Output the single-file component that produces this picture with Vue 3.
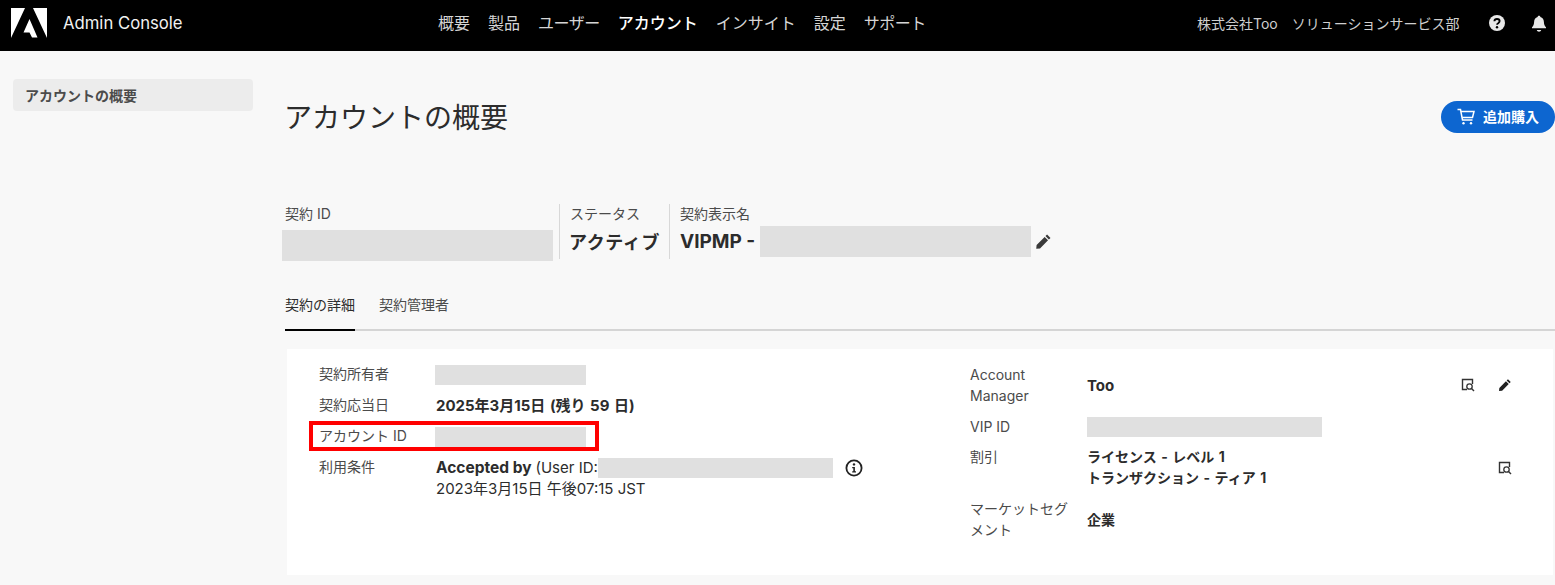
<script setup>
const nav = [
  { text: '概要' },
  { text: '製品' },
  { text: 'ユーザー', tight: true },
  { text: 'アカウント', on: true },
  { text: 'インサイト' },
  { text: '設定' },
  { text: 'サポート', tight: true }
]
</script>

<template>
  <div class="page">
    <header class="top">
      <svg class="logo" viewBox="0 0 36 30" width="36" height="30">
        <polygon points="0,0 14,0 0,30" fill="#fff" />
        <polygon points="22,0 36,0 36,30" fill="#fff" />
        <polygon points="18.5,11 26.5,29.500 21,29.500 18.500,24.500 12.500,24.500" fill="#fff" />
      </svg>
      <span class="brand">Admin Console</span>
      <nav class="nav">
        <a v-for="item in nav" :key="item.text" :class="{ on: item.on, tight: item.tight }">{{ item.text }}</a>
      </nav>
      <div class="org">
        <span>株式会社Too</span>
        <span>ソリューションサービス部</span>
      </div>
      <svg class="help" viewBox="0 0 16 16" width="16" height="16">
        <circle cx="8" cy="8" r="8" fill="#e8e8e8" />
        <path d="M5.4 6.2C5.5 4.7 6.6 4 8 4c1.5 0 2.6.8 2.6 2.1 0 1.1-.7 1.6-1.4 2.1-.7.4-1.1.8-1.1 1.5" fill="none" stroke="#000" stroke-width="1.9" />
        <circle cx="8" cy="12.2" r="1.2" fill="#000" />
      </svg>
      <svg class="bell" viewBox="0 0 16 18" width="16" height="18">
        <path d="M8 0.8c.8 0 1.3.5 1.4 1.2 2.3.6 3.4 2.6 3.5 5 .1 2.6.7 3.8 2.1 5.2v1.1H1v-1.1C2.400 10.800 3 9.600 3.100 7c.1-2.400 1.200-4.400 3.500-5C6.700 1.300 7.200.8 8 .8z" fill="#e8e8e8" />
        <path d="M5.800 15h4.400c-.2 1-1.100 1.700-2.200 1.700S6 16 5.800 15z" fill="#e8e8e8" />
      </svg>
    </header>

    <div class="body">
      <aside class="side">
        <div class="side-item">アカウントの概要</div>
      </aside>

      <main class="main">
        <div class="title-row">
          <h1>アカウントの概要</h1>
          <button class="buy">
            <svg viewBox="0 0 18 18" width="18" height="18" fill="none" stroke="#fff" stroke-width="1.500">
              <path d="M0.500 1.500h3l2 10.500h10" />
              <path d="M4 3.500h13l-1.500 6H5.200" />
              <circle cx="6.500" cy="15.200" r="1.200" fill="#fff" stroke="none" />
              <circle cx="14" cy="15.200" r="1.200" fill="#fff" stroke="none" />
            </svg>
            <span class="buy-text">追加購入</span>
          </button>
        </div>

        <section class="fields">
          <div class="field first">
            <div class="label">契約 ID</div>
            <div class="mask mask-id"></div>
          </div>
          <div class="field status">
            <div class="label">ステータス</div>
            <div class="big">アクティブ</div>
          </div>
          <div class="field name">
            <div class="label">契約表示名</div>
            <div class="name-row">
              <span class="big plain">VIPMP -</span>
              <div class="mask mask-name"></div>
              <svg class="pen" viewBox="0 0 18 18" width="17" height="17">
                <path d="M12.800 1.600l3.600 3.600-1.700 1.700-3.600-3.600zM10.200 4.200l3.600 3.600-8.500 8.500-4 .4.400-4z" fill="#3a3a3a" />
              </svg>
            </div>
          </div>
        </section>

        <div class="tabs">
          <a class="tab active">契約の詳細</a>
          <a class="tab">契約管理者</a>
        </div>

        <section class="card">
          <div class="col left">
            <div class="highlight"></div>
            <div class="row"><div class="k">契約所有者</div><div class="mask m151"></div></div>
            <div class="row"><div class="k">契約応当日</div><div class="v wide strong gap">2025年3月15日 (残り 59 日)</div></div>
            <div class="row"><div class="k">アカウント ID</div><div class="mask m151"></div></div>
            <div class="row">
              <div class="k">利用条件</div>
              <div class="v wide">
                <div class="terms">
                  <span class="strong accepted">Accepted by</span>
                  <span class="user">(User ID:</span>
                  <div class="mask m235"></div>
                  <svg class="info" viewBox="0 0 18 18" width="18" height="18">
                    <circle cx="9" cy="9" r="7.600" fill="none" stroke="#222" stroke-width="1.800" />
                    <circle cx="9" cy="5.400" r="1.200" fill="#222" />
                    <path d="M7.200 8h2.700v4.300h1.100v1.200H7.200v-1.200h1.100V9.200H7.200z" fill="#222" />
                  </svg>
                </div>
                <div>2023年3月15日 午後07:15 JST</div>
              </div>
            </div>
          </div>

          <div class="col right">
            <div class="row r3 mid">
              <div class="k2 narrow">Account Manager</div>
              <div class="v wide strong">Too</div>
              <div class="acts">
                <svg class="ic" viewBox="0 0 14 14" width="14" height="14">
                  <path d="M11.500 6V1.500h-10v10H6" fill="none" stroke="#333" stroke-width="1.400" />
                  <circle cx="8.500" cy="8.500" r="2.700" fill="none" stroke="#333" stroke-width="1.300" />
                  <path d="M10.500 10.500l2.500 2.500" stroke="#333" stroke-width="1.400" />
                </svg>
                <svg class="ic" viewBox="0 0 18 18" width="14" height="14">
                  <path d="M12.800 1.600l3.600 3.600-1.700 1.700-3.600-3.600zM10.200 4.200l3.600 3.600-8.500 8.500-4 .4.400-4z" fill="#222" />
                </svg>
              </div>
            </div>
            <div class="row r3"><div class="k2 narrow">VIP ID</div><div class="mask m235"></div><div></div></div>
            <div class="row r3">
              <div class="k narrow">割引</div>
              <div class="v strong spaced">
                <div>ライセンス - レベル 1</div>
                <div>トランザクション - ティア 1</div>
              </div>
              <div class="acts">
                <svg class="ic" viewBox="0 0 14 14" width="14" height="14">
                  <path d="M11.500 6V1.500h-10v10H6" fill="none" stroke="#333" stroke-width="1.400" />
                  <circle cx="8.500" cy="8.500" r="2.700" fill="none" stroke="#333" stroke-width="1.300" />
                  <path d="M10.500 10.500l2.500 2.500" stroke="#333" stroke-width="1.400" />
                </svg>
              </div>
            </div>
            <div class="row r3 mid">
              <div class="k2 narrow">マーケットセグメント</div>
              <div class="v strong">企業</div>
              <div></div>
            </div>
          </div>
        </section>
      </main>
    </div>
  </div>
</template>

<style>
html, body { margin: 0; background: #f8f8f8; overflow: hidden; }
</style>

<style scoped>
.page {
  width: 1555px;
  height: 585px;
  overflow: hidden;
  background: #f8f8f8;
  color: #2c2c2c;
  font-family: Inter, "Noto Sans CJK JP", sans-serif;
  font-size: 14px;
  line-height: 21px;
}
.top {
  height: 51px;
  box-sizing: border-box;
  padding-bottom: 5px;
  background: #000;
  display: flex;
  align-items: center;
  color: #fff;
}
.logo { margin-left: 11px; flex: none; }
.brand { margin-left: 16px; font-size: 16.700px; color: #f2f2f2; width: 375px; flex: none; }
.nav { display: flex; gap: 18px; font-size: 16px; color: #d5d5d5; width: 759px; flex: none; }
.nav .on { color: #fff; font-weight: 500; }
.nav .tight { letter-spacing: -0.5px; }
.org { display: flex; gap: 14px; font-size: 14px; color: #cfcfcf; white-space: nowrap; width: 292px; flex: none; }
.help { flex: none; }
.bell { flex: none; margin-left: 26px; margin-top: 1px; }
.body { display: flex; }
.side { width: 285px; flex: none; padding: 28px 0 0 13px; box-sizing: border-box; }
.side-item {
  width: 240px;
  height: 32px;
  line-height: 34px;
  box-sizing: border-box;
  padding-left: 12px;
  background: #ececec;
  border-radius: 4px;
  font-size: 14px;
  font-weight: 700;
  color: #4b4b4b;
}
.main { flex: 1; min-width: 0; padding-top: 46px; }
.title-row { display: flex; justify-content: space-between; align-items: center; height: 40px; }
h1 { margin: 2px 0 0 -1px; font-size: 28px; line-height: 40px; font-weight: 400; color: #2c2c2c; }
.buy {
  width: 114px;
  height: 32px;
  border: 0;
  border-radius: 16px;
  background: #0d66d0;
  color: #fff;
  font: inherit;
  font-weight: 700;
  display: flex;
  align-items: center;
  gap: 8px;
  padding: 0 0 0 16px;
  box-sizing: border-box;
}
.buy-text { margin-top: -2px; }
.fields { display: flex; margin-top: 67px; height: 55px; }
.label { font-size: 14px; line-height: 20px; color: #4b4b4b; }
.field { box-sizing: border-box; }
.first { width: 274px; }
.status { width: 110px; border-left: 1px solid #d8d8d8; padding-left: 10px; }
.name { border-left: 1px solid #d8d8d8; padding-left: 10px; }
.big { font-size: 18px; line-height: 28px; font-weight: 700; margin-top: 5px; white-space: nowrap; letter-spacing: 0.6px; margin-left: -1px; }
.big.plain { margin: 0; font-size: 19px; letter-spacing: 0; }
.mask { background: #e0e0e0; flex: none; }
.mask-id { width: 271px; height: 31px; margin: 6px 0 0 -3px; }
.name-row { display: flex; align-items: center; margin-top: 2px; }
.mask-name { width: 271px; height: 31px; margin-left: 5px; }
.pen { margin-left: 4px; flex: none; }
.tabs { display: flex; gap: 24px; margin-top: 36px; border-bottom: 2px solid #d5d5d5; }
.tab { padding-bottom: 14px; line-height: 20px; color: #4b4b4b; margin-bottom: -2px; border-bottom: 2px solid transparent; }
.tab.active { color: #2c2c2c; border-bottom-color: #000; }
.card {
  position: relative;
  display: flex;
  margin: 18px 2px 0;
  height: 226px;
  box-sizing: border-box;
  padding: 10px 0 0 32px;
  background: #fff;
}
.col.left { position: relative; width: 651px; flex: none; }
.col.right { flex: 1; }
.highlight {
  position: absolute;
  left: -10px;
  top: 62px;
  width: 290px;
  height: 30px;
  box-sizing: border-box;
  border: 4px solid #f00;
  pointer-events: none;
}
.row { display: grid; grid-template-columns: 117px 1fr; padding: 5px 0; color: #4b4b4b; }
.r3 { grid-template-columns: 117px 1fr 67px; }
.mid { align-items: center; }
.k { color: #4b4b4b; margin-top: -1px; }
.k2 { color: #4b4b4b; }
.narrow { width: 100px; }
.v { color: #2c2c2c; }
.wide { font-size: 15px; }
.gap { word-spacing: 1px; }
.accepted { font-size: 15.500px; }
.user { margin-left: 4px; }
.spaced { word-spacing: 1.200px; margin-top: -1px; }
.strong { font-weight: 700; color: #2c2c2c; }
.m151 { width: 151px; height: 20px; margin: 1px 0 0 -1px; }
.m235 { width: 235px; height: 20px; }
.r3 .m235 { margin-top: 1px; }
.terms { display: flex; align-items: center; white-space: nowrap; }
.info { margin-left: 12px; flex: none; }
.acts { display: flex; gap: 23px; justify-content: flex-end; padding-right: 41px; align-items: center; }
.ic { flex: none; }
</style>
